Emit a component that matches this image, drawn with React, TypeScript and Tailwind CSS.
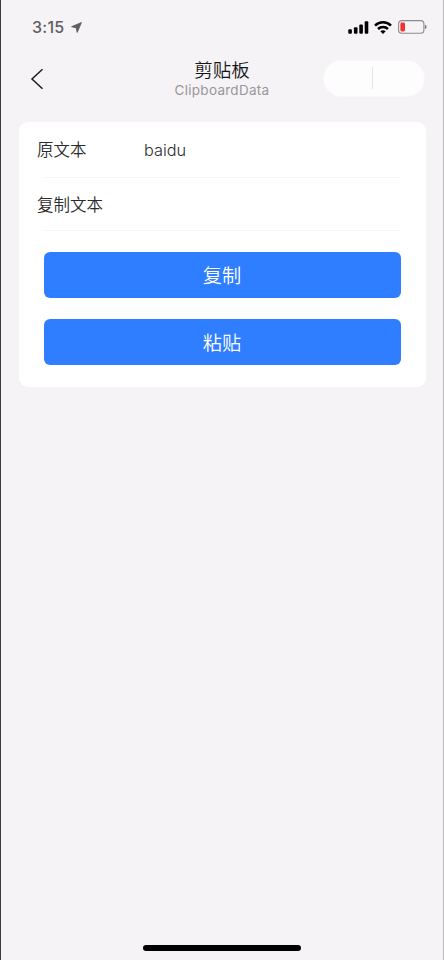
import type { ReactNode } from "react";

function StatusBar() {
  return (
    <div className="flex h-[54px] items-center justify-between pl-[31px] pr-4">
      <div className="flex items-center gap-[7px] text-[#5f5e62]">
        <span className="text-[16px] font-medium leading-5 tracking-[0.25px]">3:15</span>
        <svg width="11" height="11" viewBox="0 0 11 11" fill="currentColor" stroke="currentColor" strokeWidth="0.9" strokeLinejoin="round">
          <path d="M10.4 0.6 L0.6 4.7 L5.2 5.8 L6.2 10.4 Z" />
        </svg>
      </div>

      <div className="flex items-center">
        <svg width="21" height="13" viewBox="0 0 21 13">
          <rect x="0.3" y="8.3" width="3.6" height="4.5" rx="1" />
          <rect x="5.9" y="6.3" width="3.6" height="6.5" rx="1" />
          <rect x="11.3" y="3.6" width="3.6" height="9.2" rx="1" />
          <rect x="16.7" y="0.2" width="3.6" height="12.6" rx="1" />
        </svg>
        <svg className="ml-[5px]" width="18" height="13" viewBox="0 0 18 13" fill="none" stroke="#000" strokeWidth="2.5">
          <path d="M1 4.6 C5.5 0.2 12.5 0.2 17 4.6" />
          <path d="M4 8 C6.8 5.3 11.2 5.3 14 8" />
          <path d="M9 12.9 L6.3 10.3 C7.8 8.9 10.2 8.9 11.7 10.3 Z" fill="#000" stroke="none" />
        </svg>
        <svg className="ml-[6px]" width="29" height="14" viewBox="0 0 29 14">
          <rect x="0.6" y="0.6" width="25.3" height="12.6" rx="3.3" fill="none" stroke="#8b8a8e" strokeWidth="1.1" />
          <rect x="2.4" y="2.5" width="4.6" height="8.9" rx="1.4" fill="#f2312f" />
          <path d="M27 4.7 C29 5.3 29 8.5 27 9.1 Z" fill="#77767a" />
        </svg>
      </div>
    </div>
  );
}

function NavBar() {
  return (
    <header className="grid h-12 grid-cols-[1fr_auto_1fr] items-center pl-[29px] pr-[18px]">
      <button aria-label="返回" className="w-fit pt-px">
        <svg width="13" height="22" viewBox="0 0 13 22" fill="none" stroke="#1c1c1e" strokeWidth="1.5">
          <path d="M12.5 1.2 L2 11 L12.5 20.8" />
        </svg>
      </button>
      <div className="flex flex-col items-center pr-[11px] pt-px">
        <h1 className="text-[18.5px] font-[350] leading-[22px] text-[#161618]">剪贴板</h1>
        <p className="text-[13.5px] font-normal leading-[18px] tracking-[0.27px] text-[#98979b]">ClipboardData</p>
      </div>
      <div className="flex h-[37px] w-[102px] items-center justify-center justify-self-end rounded-full border border-[#f9f8fb] bg-[#fdfdfe]">
        <div className="mr-[3px] h-[22px] w-px bg-[#e5e4e8]" />
      </div>
    </header>
  );
}

function Row({ label, value }: { label: string; value?: string }) {
  return (
    <div className="flex items-center pl-[18px] text-[16.5px] font-[350] leading-6 text-[#2b2b2e]">
      <span className="w-[107px]">{label}</span>
      <span className="pt-px text-[16.3px]">{value}</span>
    </div>
  );
}

function Divider() {
  return <div className="mx-[25px] h-px bg-[#f6f5f9]" />;
}

function ActionButton({ children }: { children: ReactNode }) {
  return (
    <button className="flex h-[46px] w-full items-center justify-center rounded-[6px] bg-[#2f7eff] pr-px pt-px text-[19.2px] font-[350] leading-7 text-white">
      {children}
    </button>
  );
}

export default function App() {
  return (
    <div className="flex h-[960px] w-[444px] flex-col border-l border-r border-l-[#3c3b3e] border-r-[#b8b7ba] bg-[#f5f3f6] font-['Inter','Noto_Sans_CJK_SC',sans-serif]">
      <StatusBar />
      <NavBar />

      <main className="ml-[18px] mr-[17px] mt-5 h-[265px] rounded-[9px] bg-white">
        <div className="flex h-[55px] items-center">
          <Row label="原文本" value="baidu" />
        </div>
        <Divider />
        <div className="flex h-[52px] items-center pt-px">
          <Row label="复制文本" />
        </div>
        <Divider />
        <div className="flex flex-col gap-[21.4px] px-[25px] pt-[21px]">
          <ActionButton>复制</ActionButton>
          <ActionButton>粘贴</ActionButton>
        </div>
      </main>

      <div className="mx-auto mb-[9px] mt-auto h-[6px] w-[158px] rounded-full bg-black" />
    </div>
  );
}
